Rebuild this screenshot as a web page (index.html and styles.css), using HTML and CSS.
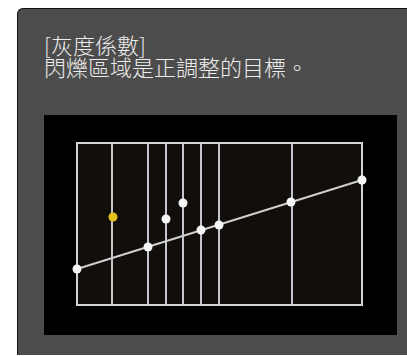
FILE: index.html
```html
<!DOCTYPE html>
<html lang="zh-Hant">
<head>
    <meta charset="UTF-8">
    <title>灰度係數</title>
    <link rel="stylesheet" href="styles.css">
</head>
<body>
    <div class="panel">
        <p class="message">[灰度係數]<br>閃爍區域是正調整的目標。</p>

        <div class="screen">
            <svg class="chart" width="353" height="220" viewBox="0 0 353 220">
                <rect x="33" y="28" width="285" height="162" fill="#110e0c" stroke="#d6d2d0" stroke-width="2"/>
                <!-- adjustment points -->
                <g stroke="#c4c4cc" stroke-width="2">
                    <line x1="68" y1="29" x2="68" y2="189"/>
                    <line x1="104" y1="29" x2="104" y2="189"/>
                    <line x1="122" y1="29" x2="122" y2="189"/>
                    <line x1="139" y1="29" x2="139" y2="189"/>
                    <line x1="157" y1="29" x2="157" y2="189"/>
                    <line x1="175" y1="29" x2="175" y2="189"/>
                    <line x1="248" y1="29" x2="248" y2="189"/>
                </g>
                <line x1="33" y1="154" x2="318" y2="65" stroke="#cfcfcf" stroke-width="2"/>
                <g fill="#f6f6f6">
                    <circle cx="33" cy="154" r="4.5"/>
                    <circle cx="104" cy="132" r="4.5"/>
                    <circle cx="122" cy="104" r="4.5"/>
                    <circle cx="139" cy="88" r="4.5"/>
                    <circle cx="157" cy="115" r="4.5"/>
                    <circle cx="175" cy="110" r="4.5"/>
                    <circle cx="247" cy="87" r="4.5"/>
                    <circle cx="318" cy="65" r="4.5"/>
                </g>
                <circle cx="69" cy="102" r="4.5" fill="#e3c21c"/>
            </svg>
        </div>
    </div>
</body>
</html>
```

FILE: styles.css
```css
body {
    margin: 0;
    background-color: #ffffff;
    font-family: "Noto Sans CJK JP", "Noto Sans CJK TC", sans-serif;
}

.panel {
    margin: 8px 0 0 17px;
    height: 347px;
    padding: 24px 0 0 26px;
    box-sizing: border-box;
    background-color: #4c4c4c;
    border-top: 1px solid #111111;
    border-left: 1px solid #111111;
    border-top-left-radius: 6px;
}

.message {
    margin: 0;
    color: #ececec;
    font-size: 22px;
    font-weight: 300;
    line-height: 22px;
}

.screen {
    margin-top: 38px;
    width: 353px;
    height: 220px;
    background-color: #000000;
}

.chart {
    display: block;
}
```
